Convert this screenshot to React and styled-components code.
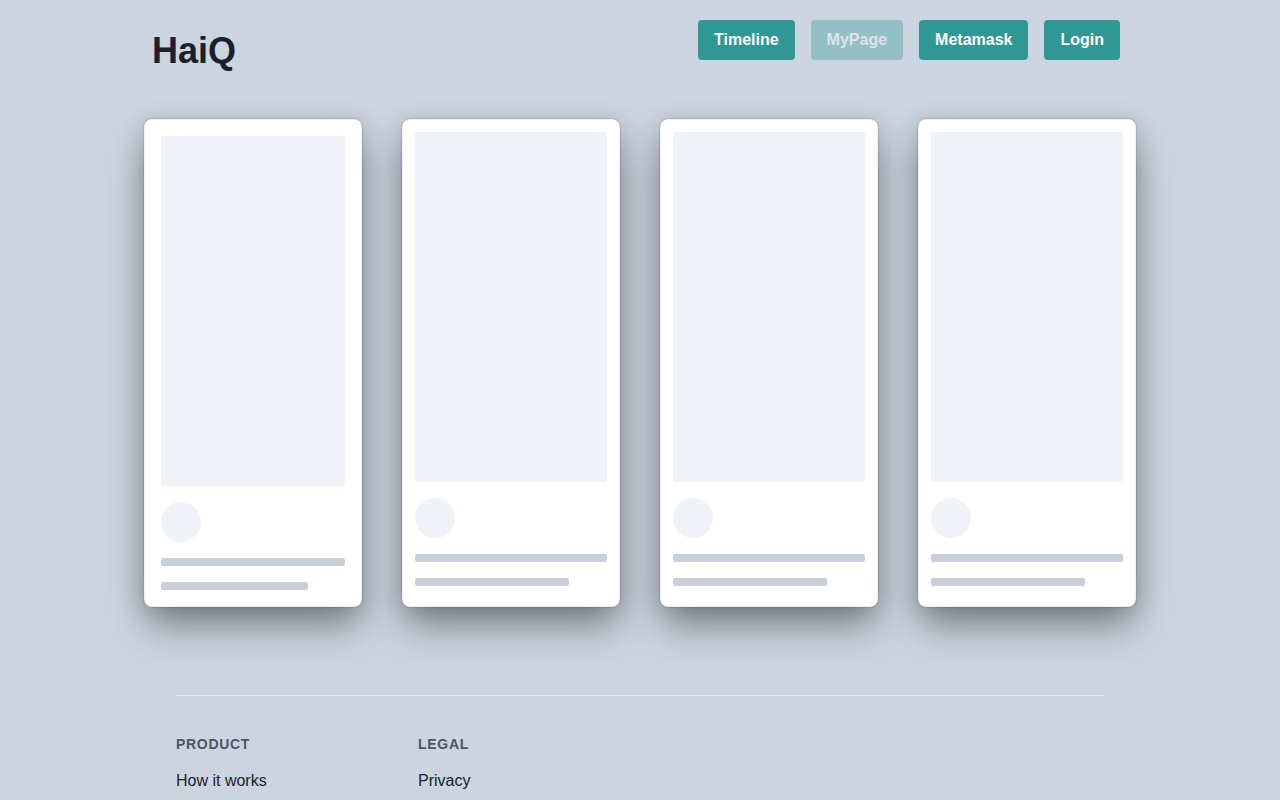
import React from 'react';
import styled, { createGlobalStyle } from 'styled-components';

const GlobalStyle = createGlobalStyle`
  html, body {
    margin: 0;
    padding: 0;
    background: #cbd5e0;
    font-family: "Liberation Sans", Arial, sans-serif;
    color: #1a202c;
  }
  * {
    box-sizing: border-box;
  }
`;

const Page = styled.div`
  width: 1024px;
  margin: 0 auto;
  min-height: 800px;
`;

const Header = styled.header`
  display: flex;
  justify-content: space-between;
  align-items: flex-start;
  padding: 20px 32px 0 24px;
`;

const Logo = styled.h1`
  margin: 11px 0 0;
  font-size: 36px;
  line-height: 40px;
  font-weight: 700;
  color: #1a202c;
`;

const Nav = styled.nav`
  display: flex;
  gap: 16px;
`;

const NavButton = styled.button`
  font-family: inherit;
  font-size: 16px;
  line-height: 24px;
  font-weight: 700;
  color: #fff;
  background: #319795;
  border: none;
  border-radius: 4px;
  padding: 8px 16px;
  opacity: ${(p) => (p.disabled ? 0.35 : 1)};
  cursor: pointer;
`;

const CardRow = styled.section`
  display: grid;
  grid-template-columns: repeat(4, 218px);
  gap: 40px;
  padding: 0 16px;
  margin-top: 48px;
`;

const Card = styled.article`
  display: flex;
  flex-direction: column;
  background: #fff;
  border-radius: 8px;
  border: 1px solid rgba(0, 0, 0, 0.06);
  padding: ${(p) => (p.wide ? 16 : 12)}px;
  height: 488px;
  box-shadow: 0 0 2px rgba(0, 0, 0, 0.3), 0 22px 40px -4px rgba(0, 0, 0, 0.38),
    0 6px 26px rgba(0, 0, 0, 0.16);
`;

const Thumb = styled.div`
  height: 350px;
  background: #eff3f8;
  border-radius: 2px;
`;

const Avatar = styled.div`
  width: 40px;
  height: 40px;
  border-radius: 50%;
  background: #eff3f8;
  margin-top: 16px;
`;

const Line = styled.div`
  height: 8px;
  width: ${(p) => p.w || '100%'};
  background: #c6cfdb;
  border-radius: 2px;
  margin-top: 16px;
`;

const Footer = styled.footer`
  margin: 88px 48px 0;
  border-top: 1px solid #e2e8f0;
  padding-top: 40px;
  display: grid;
  grid-template-columns: 242px 242px;
`;

const FooterCol = styled.div`
  display: flex;
  flex-direction: column;
`;

const FooterTitle = styled.h4`
  margin: 0;
  font-size: 14px;
  line-height: 16px;
  font-weight: 700;
  letter-spacing: 0.05em;
  text-transform: uppercase;
  color: #4a5568;
`;

const FooterLink = styled.a`
  margin-top: 19px;
  font-size: 16px;
  line-height: 20px;
  color: #1a202c;
  text-decoration: none;
`;

const SkeletonCard = ({ wide }) => (
  <Card wide={wide}>
    <Thumb />
    <Avatar />
    <Line />
    <Line w="80%" />
  </Card>
);

export default function App() {
  return (
    <Page>
      <GlobalStyle />
      <Header>
        <Logo>HaiQ</Logo>
        <Nav>
          <NavButton>Timeline</NavButton>
          <NavButton disabled>MyPage</NavButton>
          <NavButton>Metamask</NavButton>
          <NavButton>Login</NavButton>
        </Nav>
      </Header>
      <CardRow>
        <SkeletonCard wide />
        <SkeletonCard />
        <SkeletonCard />
        <SkeletonCard />
      </CardRow>
      <Footer>
        <FooterCol>
          <FooterTitle>Product</FooterTitle>
          <FooterLink href="#">How it works</FooterLink>
        </FooterCol>
        <FooterCol>
          <FooterTitle>Legal</FooterTitle>
          <FooterLink href="#">Privacy</FooterLink>
        </FooterCol>
      </Footer>
    </Page>
  );
}
